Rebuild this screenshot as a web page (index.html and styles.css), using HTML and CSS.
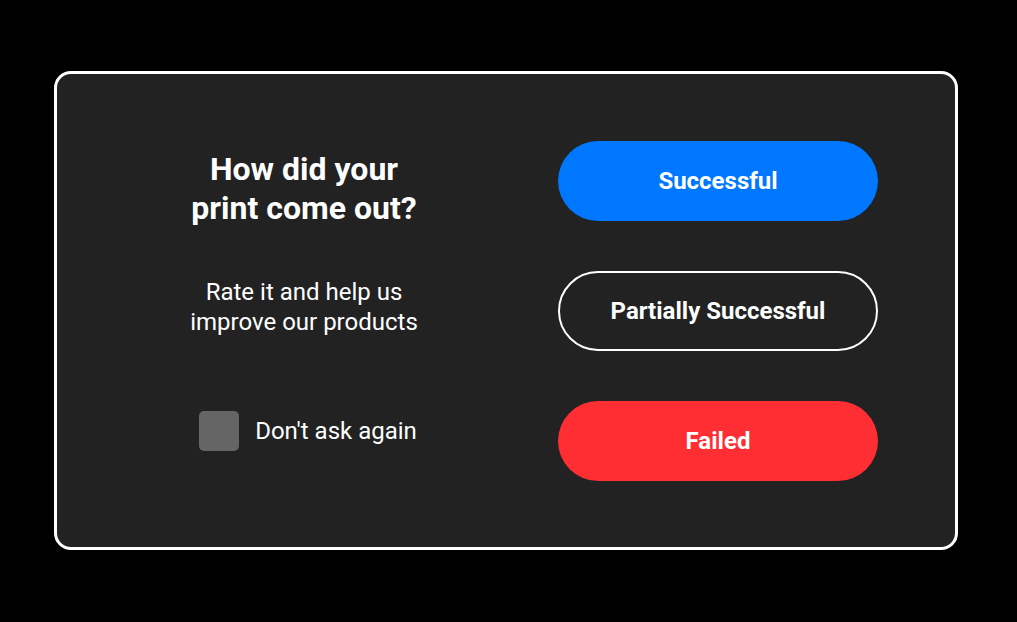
FILE: index.html
```html
<!DOCTYPE html>
<html lang="en">
<head>
<meta charset="utf-8">
<title>Print feedback</title>
<link rel="stylesheet" href="styles.css">
</head>
<body>
<div class="page">
  <section class="card">
    <div class="info">
      <h1 class="title">How did your<br>print come out?</h1>
      <p class="subtitle">Rate it and help us<br>improve our products</p>
      <label class="check">
        <span class="box"></span>
        <span class="check-label">Don't ask again</span>
      </label>
    </div>
    <div class="actions">
      <button class="btn btn-success">Successful</button>
      <button class="btn btn-partial">Partially Successful</button>
      <button class="btn btn-failed">Failed</button>
    </div>
  </section>
</div>
</body>
</html>
```
FILE: styles.css
```css
* { box-sizing: border-box; }
html, body {
  margin: 0;
  padding: 0;
  background: #000;
  font-family: Roboto, "Liberation Sans", sans-serif;
  color: #fff;
}
.page {
  width: 1017px;
  height: 622px;
  padding: 71px 0 0 54px;
}
.card {
  width: 904px;
  height: 479px;
  border: 3px solid #fff;
  border-radius: 17px;
  background: #222222;
  padding: 67px 77px 66px 77px;
  display: flex;
  gap: 84px;
}
.info {
  width: 340px;
  display: flex;
  flex-direction: column;
  align-items: center;
  text-align: center;
  padding-top: 9px;
}
.title {
  margin: 0 0 49px 0;
  font-size: 32px;
  line-height: 39px;
  font-weight: 700;
}
.subtitle {
  margin: 0 0 74px 0;
  font-size: 24px;
  line-height: 30px;
  font-weight: 400;
}
.check {
  display: flex;
  align-items: center;
  gap: 16px;
  margin-left: 8px;
}
.box {
  width: 40px;
  height: 40px;
  border-radius: 5px;
  background: #656565;
}
.check-label {
  font-size: 24px;
}
.actions {
  width: 320px;
  display: flex;
  flex-direction: column;
  gap: 50px;
}
.btn {
  height: 80px;
  width: 320px;
  border-radius: 40px;
  border: none;
  font-family: Roboto, "Liberation Sans", sans-serif;
  font-size: 24px;
  font-weight: 700;
  color: #fff;
  padding: 0;
}
.btn-success { background: #0077ff; }
.btn-partial {
  background: transparent;
  border: 2px solid #fff;
}
.btn-failed { background: #ff2e33; }
```
